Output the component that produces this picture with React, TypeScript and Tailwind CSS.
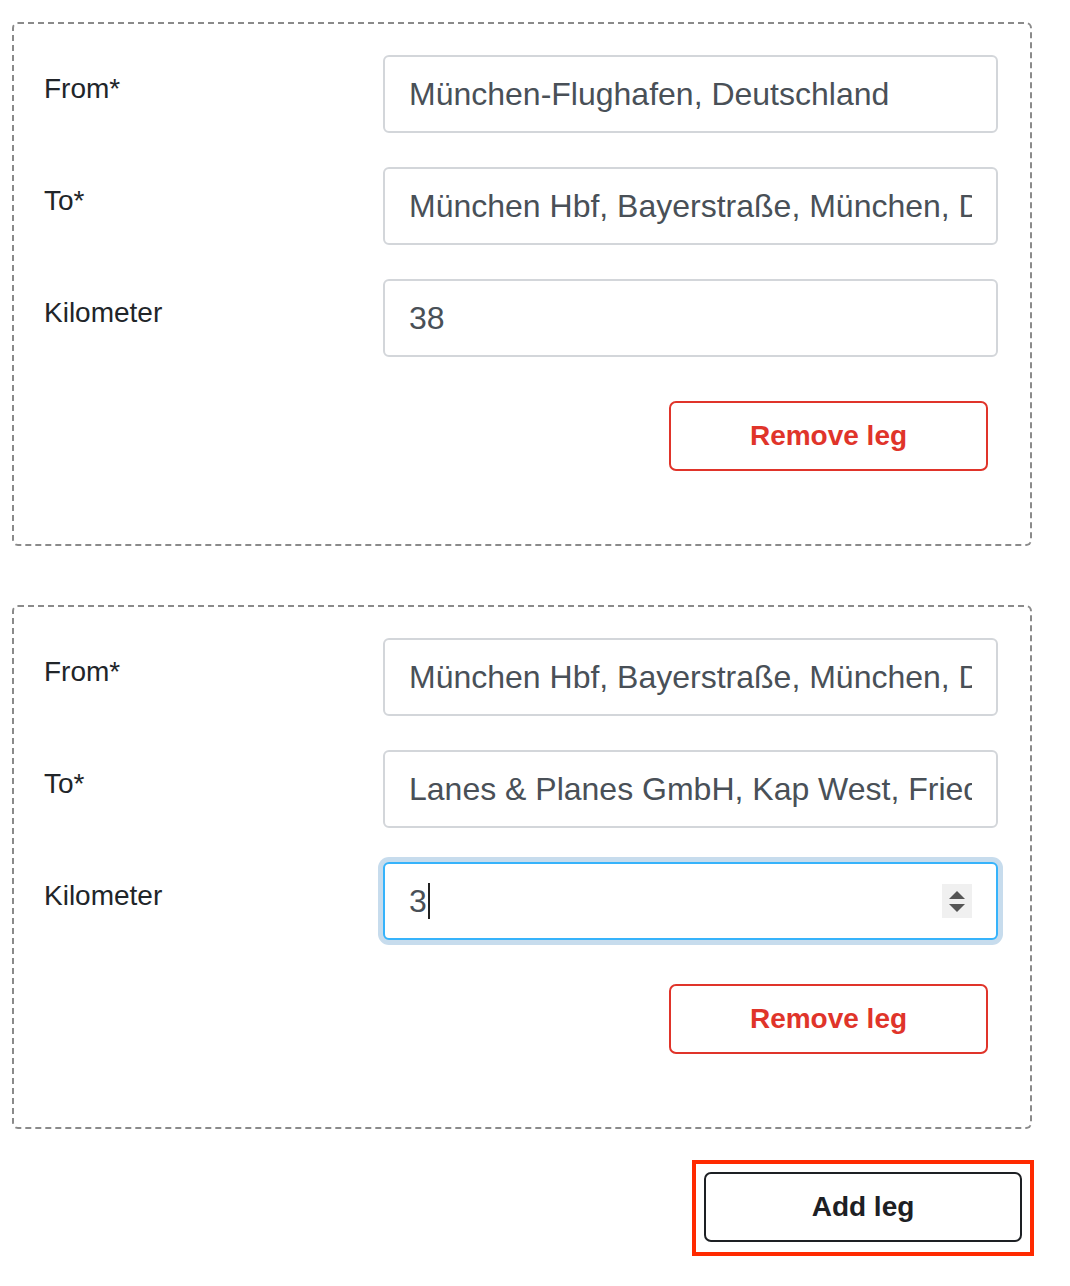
import React from "react";

const legs = [
  { from: "München-Flughafen, Deutschland", to: "München Hbf, Bayerstraße, München, Deutschland", km: "38", focused: false },
  { from: "München Hbf, Bayerstraße, München, Deutschland", to: "Lanes & Planes GmbH, Kap West, Friedenheimer Brücke, München", km: "3", focused: true },
];

function Row({ label, children }: { label: string; children: React.ReactNode }) {
  return (
    <div className="flex items-start">
      <label className="w-[339px] shrink-0 pt-[13px] text-[28px] leading-[42px] text-[#212529]">{label}</label>
      <div className="flex-1">{children}</div>
    </div>
  );
}

function TextInput({ value }: { value: string }) {
  return (
    <input
      readOnly
      value={value}
      className="block h-[78px] w-full rounded-[6px] border-2 border-[#d3d6da] bg-white px-6 text-[32px] text-[#495057] outline-none"
    />
  );
}

function FocusedNumber({ value }: { value: string }) {
  return (
    <div className="relative flex h-[78px] w-full items-center rounded-[6px] border-2 border-[#36b3fb] bg-white px-6 text-[32px] text-[#495057] shadow-[0_0_0_5px_#c7dced]">
      <span>{value}</span>
      <span className="ml-px h-[36px] w-[2px] bg-[#222]" />
      <div className="absolute right-[24px] top-[20px] flex h-[34px] w-[30px] flex-col items-center justify-center gap-[5px] bg-[#f0f0f0]">
        <svg width="16" height="8" viewBox="0 0 16 8"><path d="M8 0L16 8H0z" fill="#555" /></svg>
        <svg width="16" height="8" viewBox="0 0 16 8"><path d="M0 0H16L8 8z" fill="#555" /></svg>
      </div>
    </div>
  );
}

export default function App() {
  return (
    <div className="min-h-[1286px] bg-white pl-[12px] pt-[22px] font-['Liberation_Sans',Arial,sans-serif]" style={{ width: 1070 }}>
      <div className="w-[1020px]">
        <div className="flex flex-col gap-[59px]">
          {legs.map((leg, i) => (
            <div
              key={i}
              className="rounded-[6px] border-2 border-dashed border-[#8a8a8a] pb-[73px] pl-[30px] pr-[32px] pt-[31px]"
            >
              <div className="flex flex-col gap-[34px]">
                <Row label="From*">
                  <TextInput value={leg.from} />
                </Row>
                <Row label="To*">
                  <TextInput value={leg.to} />
                </Row>
                <Row label="Kilometer">
                  {leg.focused ? <FocusedNumber value={leg.km} /> : <TextInput value={leg.km} />}
                </Row>
              </div>
              <div className="mt-[44px] flex justify-end pr-[10px]">
                <button className="h-[70px] w-[319px] rounded-[7px] border-2 border-[#e0342a] bg-white text-[28px] font-bold text-[#e0342a]">
                  Remove leg
                </button>
              </div>
            </div>
          ))}
        </div>
        <div className="-mr-[2px] mt-[31px] flex justify-end">
          <div className="border-4 border-[#ff2a00] px-[8px] pb-[10px] pt-[8px]">
            <button className="block h-[70px] w-[318px] rounded-[7px] border-2 border-[#1d2024] bg-white text-[28px] font-bold text-[#1d2024]">
              Add leg
            </button>
          </div>
        </div>
      </div>
    </div>
  );
}
